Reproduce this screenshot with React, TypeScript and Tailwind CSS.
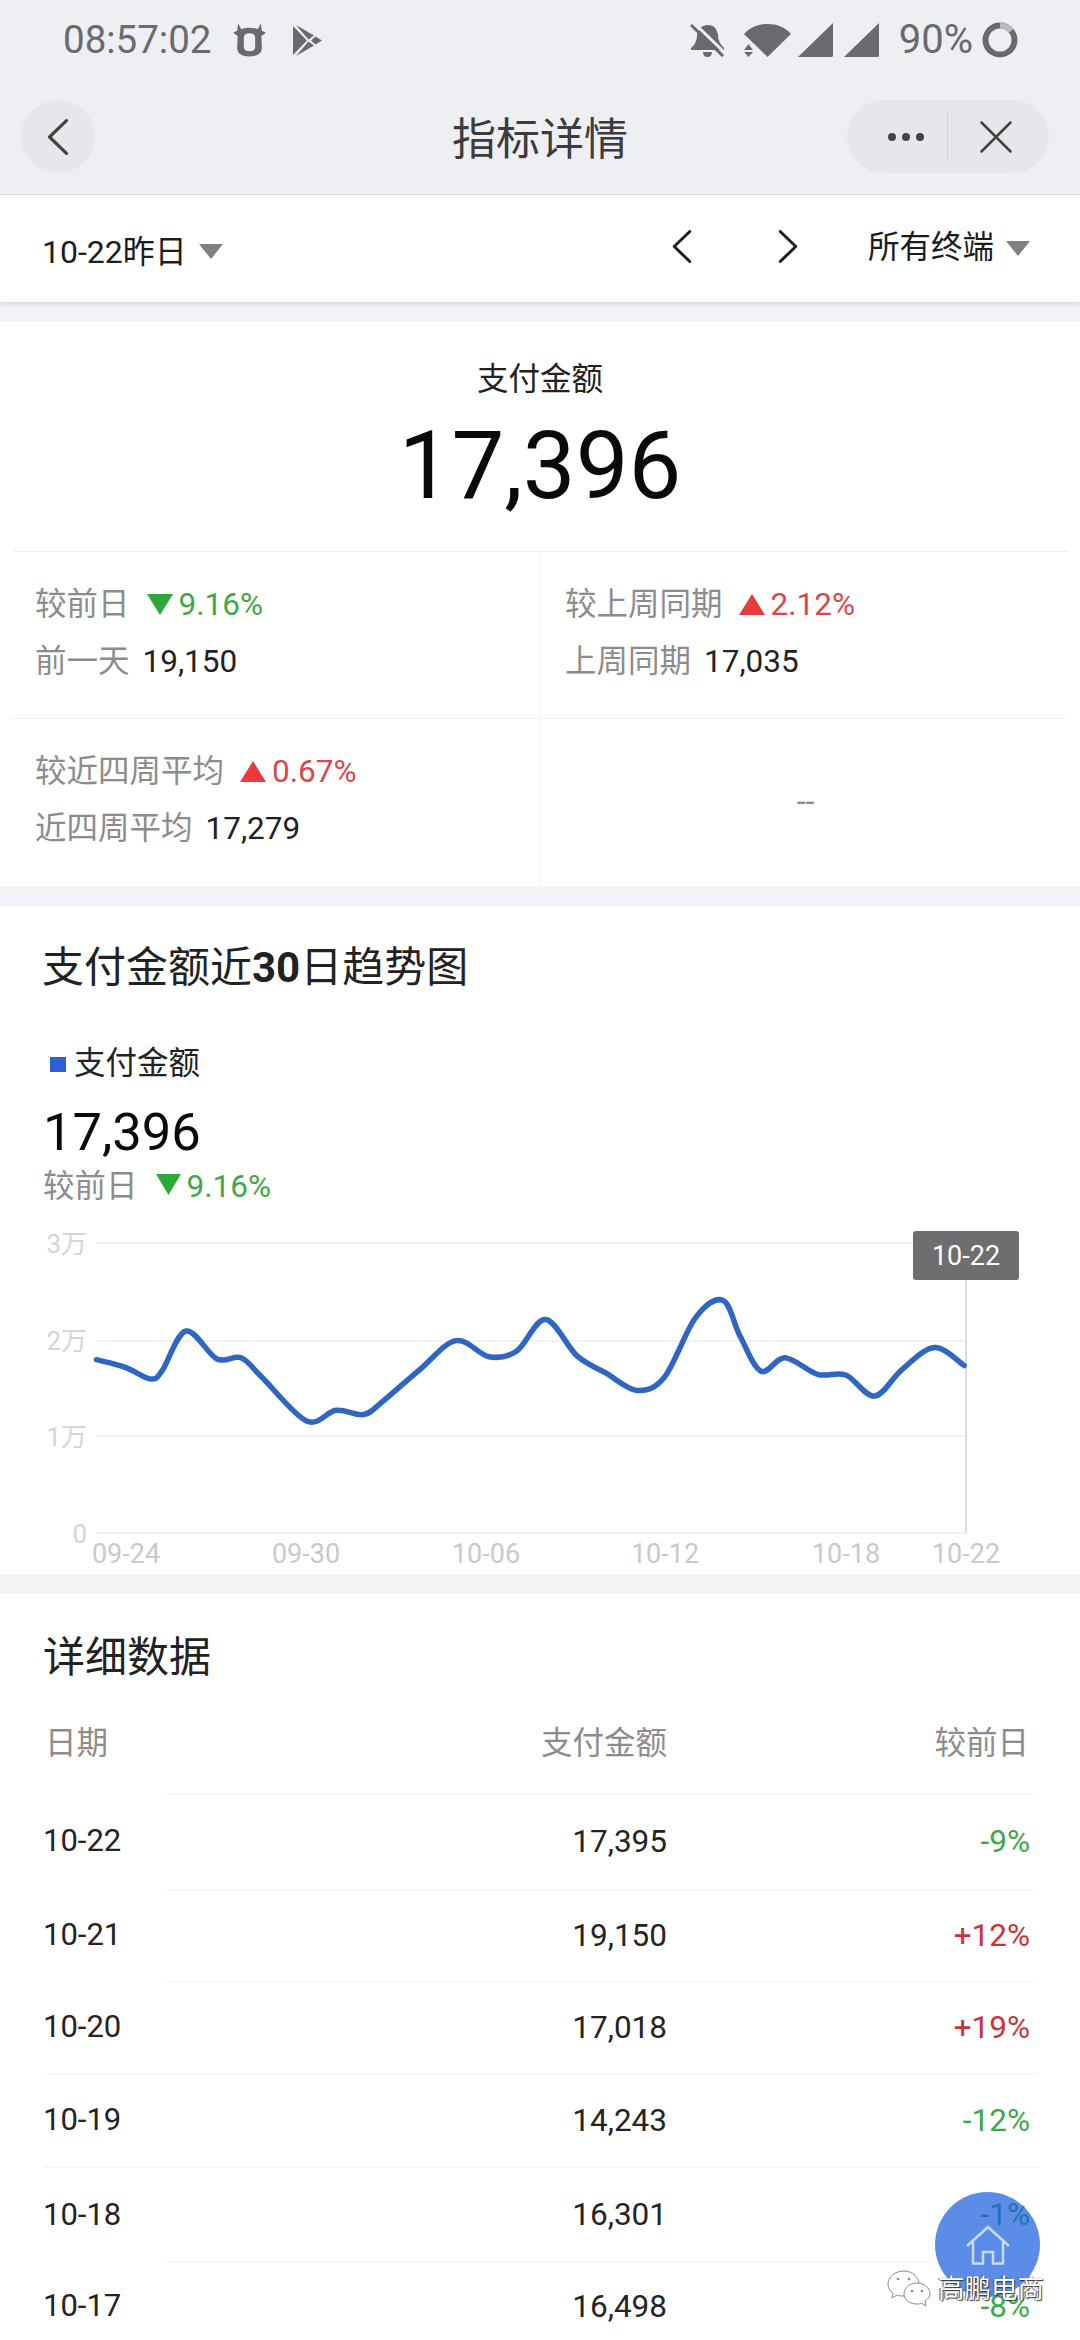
import React from "react";

const pts: [number, number][] = [
  [140, 940], [182, 960], [218, 990], [235, 970], [270, 865], [315, 938], [350, 935], [380, 985],
  [445, 1100], [488, 1072], [528, 1083], [555, 1050], [610, 965], [662, 890], [710, 932], [750, 918],
  [792, 835], [838, 930], [880, 975], [925, 1020], [965, 985], [1010, 830], [1050, 785], [1075, 880],
  [1105, 970], [1140, 935], [1187, 978], [1228, 980], [1270, 1035], [1310, 965], [1357, 908], [1400, 955],
];

function linePath() {
  const p = pts.map(([x, y]) => [x / 1.452, 1000 + y / 2.613]);
  let d = `M${p[0][0].toFixed(1)} ${p[0][1].toFixed(1)}`;
  for (let i = 0; i < p.length - 1; i++) {
    const a = p[Math.max(i - 1, 0)], b = p[i], c = p[i + 1], e = p[Math.min(i + 2, p.length - 1)];
    const c1 = [b[0] + (c[0] - a[0]) / 6, b[1] + (c[1] - a[1]) / 6];
    const c2 = [c[0] - (e[0] - b[0]) / 6, c[1] - (e[1] - b[1]) / 6];
    d += ` C${c1[0].toFixed(1)} ${c1[1].toFixed(1)} ${c2[0].toFixed(1)} ${c2[1].toFixed(1)} ${c[0].toFixed(1)} ${c[1].toFixed(1)}`;
  }
  return d;
}

const Tri = ({ up, className }: { up?: boolean; className: string }) => (
  <svg viewBox="0 0 24 20" preserveAspectRatio="none" className={className} fill="currentColor">
    <path d={up ? "M12 0 24 20H0Z" : "M0 0H24L12 20Z"} />
  </svg>
);

const Chevron = ({ left, className }: { left?: boolean; className: string }) => (
  <svg viewBox="0 0 20 34" className={className} fill="none" stroke="currentColor" strokeWidth="3" strokeLinecap="round" strokeLinejoin="round">
    <path d={left ? "M18 1.5 2 17l16 15.500" : "M2 1.500 18 17 2 32.500"} />
  </svg>
);

function Metric({ label, dir, pct, sub, val, tri }: { label: string; dir: "up" | "down"; pct: string; sub: string; val: string; tri: string }) {
  const isUp = dir === "up";
  return (
    <div className="pt-[24px]">
      <div className="flex items-center leading-[57px] text-[31.500px] text-[#8c8c8c]">
        <span>{label}</span>
        <Tri up={isUp} className={tri} />
        <span className={isUp ? "text-[#d8474c]" : "text-[#3fa845]"}>{pct}</span>
      </div>
      <div className="flex items-center leading-[57px] text-[31.500px]">
        <span className="text-[#8c8c8c]">{sub}</span>
        <span className="ml-[13px] text-[#222222]">{val}</span>
      </div>
    </div>
  );
}

const rows = [
  { d: "10-22", v: "17,395", c: "-9%", up: false, h: "h-[96px]", inset: true },
  { d: "10-21", v: "19,150", c: "+12%", up: true, h: "h-[92px]", inset: true },
  { d: "10-20", v: "17,018", c: "+19%", up: true, h: "h-[92px]", inset: true },
  { d: "10-19", v: "14,243", c: "-12%", up: false, h: "h-[94px]", inset: false },
  { d: "10-18", v: "16,301", c: "-1%", up: false, h: "h-[95px]", inset: false },
  { d: "10-17", v: "16,498", c: "-8%", up: false, h: "h-[88px]", inset: true },
];

export default function App() {
  return (
    <div className="relative w-[1080px] h-[2340px] overflow-hidden bg-[#f2f3f6] font-['Roboto','Noto_Sans_CJK_SC',sans-serif]">
      {/* status bar */}
      <div className="h-[80px] bg-[#eeeff3] flex items-center pl-[63px] pr-[62px] text-[#69696e]">
        <span className="text-[38.500px] leading-none">08:57:02</span>
        <svg viewBox="0 0 32 32" className="ml-[22px] w-[33px] h-[34px]" fill="currentColor" fillRule="evenodd">
          <path d="M5 0 8 5.500C10 4.500 13 4 16 4s6 .5 8 1.500L27 0l1 7 4 2-4.500 3 .5 12c0 5-5 8-12 8S4 29 4 24l.5-12L0 9l4-2ZM16 9.500c-3.500 0-5.500 1.500-5.500 4v9c0 3 2 4.500 5.500 4.500s5.500-1.500 5.500-4.500v-9c0-2.500-2-4-5.500-4Z" />
        </svg>
        <svg viewBox="0 0 29 31" className="ml-[27px] w-[29px] h-[31px]" fill="currentColor">
          <path d="M0 1 14 15.500 0 30Z" />
          <path d="M3 0 21 10.500 15.500 14.500Z" />
          <path d="M3 31 21 20.500 15.500 16.500Z" />
          <path d="M22.500 11.500 29 15.500 22.500 19.500 18 15.500Z" />
        </svg>
        <svg viewBox="0 0 35 33" className="ml-auto w-[35px] h-[33px]" fill="currentColor">
          <path d="M18 1c6 0 9 4 10 10 0 5 2 9 6 13v2H1v-2c4-3 6-8 6-13C8 5 12 1 18 1ZM13 28h9c0 3-2 5-4.500 5S13 31 13 28Z" />
          <path d="M5 0 35 29" stroke="#eeeff3" strokeWidth="3" fill="none" />
          <path d="M1 1 33 32" stroke="currentColor" strokeWidth="3" fill="none" />
        </svg>
        <svg viewBox="0 0 47 33" className="ml-[19px] w-[47px] h-[33px]" fill="currentColor">
          <path d="M0 10C6 3 14 0 23.500 0S41 3 47 10L23.500 33Z" />
          <path d="M4.500 20 9 26H0ZM0 28H9L4.500 33Z" />
          <path d="M0 10 23.500 33" stroke="#eeeff3" strokeWidth="1.500" fill="none" transform="translate(-1 1)" />
        </svg>
        <svg viewBox="0 0 35 34" className="ml-[7px] w-[35px] h-[34px]" fill="currentColor"><path d="M35 0V32.500Q35 34 33.500 34H0Z" /></svg>
        <svg viewBox="0 0 35 34" className="ml-[11px] w-[35px] h-[34px]" fill="currentColor"><path d="M35 0V32.500Q35 34 33.500 34H0Z" /></svg>
        <span className="ml-[20px] text-[40px] leading-none">90%</span>
        <svg viewBox="0 0 36 36" className="ml-[9px] w-[36px] h-[36px]" fill="none" strokeWidth="6">
          <circle cx="18" cy="18" r="14.500" stroke="currentColor" />
          <path d="M18 3.500A14.500 14.500 0 0 1 29 9" stroke="#b9b9bd" />
        </svg>
      </div>

      {/* nav bar */}
      <div className="h-[115px] bg-[#eeeff3] border-b border-[#dcdcdf] grid grid-cols-[1fr_auto_1fr] items-center px-[31px] pb-[1px]">
        <div className="-ml-[10px] w-[74px] h-[73px] rounded-full bg-[#e6e7ea] flex items-center justify-center text-[#444444]">
          <Chevron left className="w-[22px] h-[36px]" />
        </div>
        <div className="text-[44px] leading-none text-[#3c3c3f] pt-[7px]">指标详情</div>
        <div className="justify-self-end w-[202px] h-[73px] rounded-full bg-[#e6e7ea] flex items-center text-[#444444]">
          <div className="ml-[41px] w-[36px] flex justify-between">
            <span className="w-[8px] h-[8px] rounded-full bg-[#444444]" />
            <span className="w-[8px] h-[8px] rounded-full bg-[#444444]" />
            <span className="w-[8px] h-[8px] rounded-full bg-[#444444]" />
          </div>
          <div className="ml-[23px] w-px h-[48px] bg-[#d0d0d3]" />
          <svg viewBox="0 0 32 32" className="ml-[32px] w-[32px] h-[32px]" fill="none" stroke="currentColor" strokeWidth="2.500" strokeLinecap="round">
            <path d="M1.500 1.500 30.500 30.500M30.500 1.500 1.500 30.500" />
          </svg>
        </div>
      </div>

      {/* filter bar */}
      <div className="h-[107px] bg-white shadow-[0_2px_5px_rgba(0,0,0,0.12)] flex items-center pl-[42px] pr-[50px] text-[32px] text-[#1c1c1c]">
        <span className="leading-none mt-[6px]">10-22昨日</span>
        <Tri className="ml-[12px] mt-[6px] w-[24px] h-[15px] text-[#808080]" />
        <Chevron left className="ml-auto mr-[86px] -mt-[4px] w-[20px] h-[33px]" />
        <Chevron className="mr-[70px] -mt-[4px] w-[20px] h-[33px]" />
        <span className="leading-none text-[31.500px] -mt-[1px]">所有终端</span>
        <Tri className="ml-[12px] -mt-[1px] w-[24px] h-[15px] text-[#808080]" />
      </div>

      {/* summary */}
      <section className="mt-[20px] h-[564px] bg-white">
        <div className="h-[229px] flex flex-col items-center">
          <div className="mt-[38px] text-[31.500px] leading-[40px] text-[#222222]">支付金额</div>
          <div className="mt-[16px] text-[94px] leading-[100px] text-[#0a0a0a]">17,396</div>
        </div>
        <div className="ml-[13px] mr-[12px] border-t border-[#efeff1] grid grid-cols-[527px_1fr]">
          <div className="h-[167px] pl-[22px] border-b border-[#f2f2f4]">
            <Metric label="较前日" dir="down" pct="9.16%" sub="前一天" val="19,150" tri="ml-[17px] mr-[6px] w-[26px] h-[21px] text-[#2fa83a]" />
          </div>
          <div className="h-[167px] pl-[24px] border-l border-b border-[#f2f2f4]">
            <Metric label="较上周同期" dir="up" pct="2.12%" sub="上周同期" val="17,035" tri="ml-[16px] mr-[6px] w-[26px] h-[21px] text-[#e93b3b]" />
          </div>
          <div className="h-[167px] pl-[22px]">
            <Metric label="较近四周平均" dir="up" pct="0.67%" sub="近四周平均" val="17,279" tri="ml-[16px] mr-[6px] w-[26px] h-[21px] text-[#e93b3b]" />
          </div>
          <div className="h-[167px] border-l border-[#f2f2f4] flex items-center justify-center">
            <span className="text-[32px] leading-none text-[#8c8c8c] ml-[2px] mb-[3px]">--</span>
          </div>
        </div>
      </section>

      {/* trend */}
      <section className="mt-[21px] h-[667px] bg-white">
        <div className="pt-[40px] pl-[42px] text-[42px] leading-[42px] text-[#222222]">
          支付金额近<span className="font-bold">30</span>日趋势图
        </div>
        <div className="mt-[55px] pl-[50px] flex items-center text-[31.500px] leading-[40px] text-[#222222]">
          <span className="w-[16px] h-[15px] bg-[#2a62d6] mr-[8px]" />
          支付金额
        </div>
        <div className="mt-[18px] pl-[43px] text-[52.500px] leading-[60px] text-[#0a0a0a]">17,396</div>
        <div className="mt-[5px] pl-[43px] flex items-center text-[31.500px] leading-[40px] text-[#8c8c8c]">
          <span>较前日</span>
          <Tri className="ml-[18px] mr-[6px] -mt-[6px] w-[25px] h-[21px] text-[#2fa83a]" />
          <span className="text-[#3fa845]">9.16%</span>
        </div>
        <svg viewBox="0 1207 1080 367" className="block w-[1080px] h-[367px]">
          {[1243, 1341, 1436, 1533].map((y) => (
            <line key={y} x1="96" x2="966" y1={y} y2={y} stroke="#f1f1f3" strokeWidth="2" />
          ))}
          <g fill="#d4d4d8" fontSize="26" textAnchor="end" fontFamily="Roboto, 'Noto Sans CJK SC', sans-serif">
            <text x="87" y="1253">3万</text>
            <text x="87" y="1350">2万</text>
            <text x="87" y="1446">1万</text>
            <text x="87" y="1543">0</text>
          </g>
          <g fill="#c9c9cd" fontSize="27" textAnchor="middle" fontFamily="Roboto, 'Noto Sans CJK SC', sans-serif">
            <text x="126" y="1563">09-24</text>
            <text x="306" y="1563">09-30</text>
            <text x="486" y="1563">10-06</text>
            <text x="665" y="1563">10-12</text>
            <text x="846" y="1563">10-18</text>
            <text x="966" y="1563">10-22</text>
          </g>
          <line x1="966" x2="966" y1="1280" y2="1533" stroke="#cfcfd2" strokeWidth="1.500" />
          <path d={linePath()} fill="none" stroke="#2f66c2" strokeWidth="5.500" strokeLinecap="round" strokeLinejoin="round" />
          <rect x="913" y="1231" width="106" height="49" rx="3" fill="#6e6e70" />
          <text x="966" y="1265" fill="#ffffff" fontSize="27" textAnchor="middle" fontFamily="Roboto, sans-serif">10-22</text>
        </svg>
      </section>

      {/* detail table */}
      <section className="mt-[20px] h-[746px] bg-white">
        <div className="pt-[39px] pl-[43px] text-[42px] leading-[50px] text-[#222222]">详细数据</div>
        <div className="mt-[41px] flex ml-[43px] mr-[50px] text-[31.500px] leading-[40px] text-[#8c8c8c]">
          <span className="flex-1 pl-[2px]">日期</span>
          <span>支付金额</span>
          <span className="w-[363px] text-right pr-[1px]">较前日</span>
        </div>
        <div className="mt-[29px] ml-[43px] mr-[42px]">
          {rows.map((r) => (
            <div key={r.d} className={r.h + " flex flex-col"}>
              <div className={r.inset ? "ml-[119px] h-[1px] bg-[#f5f5f6]" : "h-[1px] bg-[#f3f3f5]"} />
              <div className="flex-1 flex items-center pr-[8px] text-[31.500px] text-[#242424]">
                <span className="flex-1 text-[31px]">{r.d}</span>
                <span>{r.v}</span>
                <span className={"w-[363px] text-right " + (r.up ? "text-[#c9343c]" : "text-[#3fa845]")}>{r.c}</span>
              </div>
            </div>
          ))}
        </div>
      </section>

      {/* floating home button */}
      <div className="absolute left-[935px] top-[2192px] w-[105px] h-[105px] rounded-full bg-[#155cde]/70 flex items-center justify-center">
        <svg viewBox="0 0 44 40" className="w-[44px] h-[40px]" fill="none" stroke="#c9dbf8" strokeWidth="2.500">
          <path d="M1 21 22 2l21 19" />
          <path d="M7 17v21.500h10V27h10v11.500h10V17" />
        </svg>
      </div>

      {/* watermark */}
      <div className="absolute left-[887px] top-[2270px] flex items-center">
        <svg viewBox="0 0 44 38" className="w-[44px] h-[38px]" fill="#ffffff" stroke="#8a8a8a" strokeWidth="1">
          <path d="M17 1C8 1 1 7 1 14c0 4 2 7 5 9l-1 5 5-3c2 1 4 1 7 1 9 0 15-6 15-12S26 1 17 1Z" />
          <path d="M30 13c-7 0-13 5-13 11s6 10 13 10c2 0 3 0 4-1l5 3-1-5c3-2 5-4 5-7 0-6-6-11-13-11Z" />
          <g fill="#8a8a8a" stroke="none">
            <circle cx="11" cy="9" r="1.300" /><circle cx="22" cy="9" r="1.300" />
            <circle cx="25" cy="21" r="1.300" /><circle cx="35" cy="21" r="1.300" />
          </g>
        </svg>
        <span className="ml-[7px] text-[26.500px] leading-[38px] text-white [text-shadow:1px_1px_1px_#333333,-1px_0_1px_#555555]">高鹏电商</span>
      </div>
    </div>
  );
}
